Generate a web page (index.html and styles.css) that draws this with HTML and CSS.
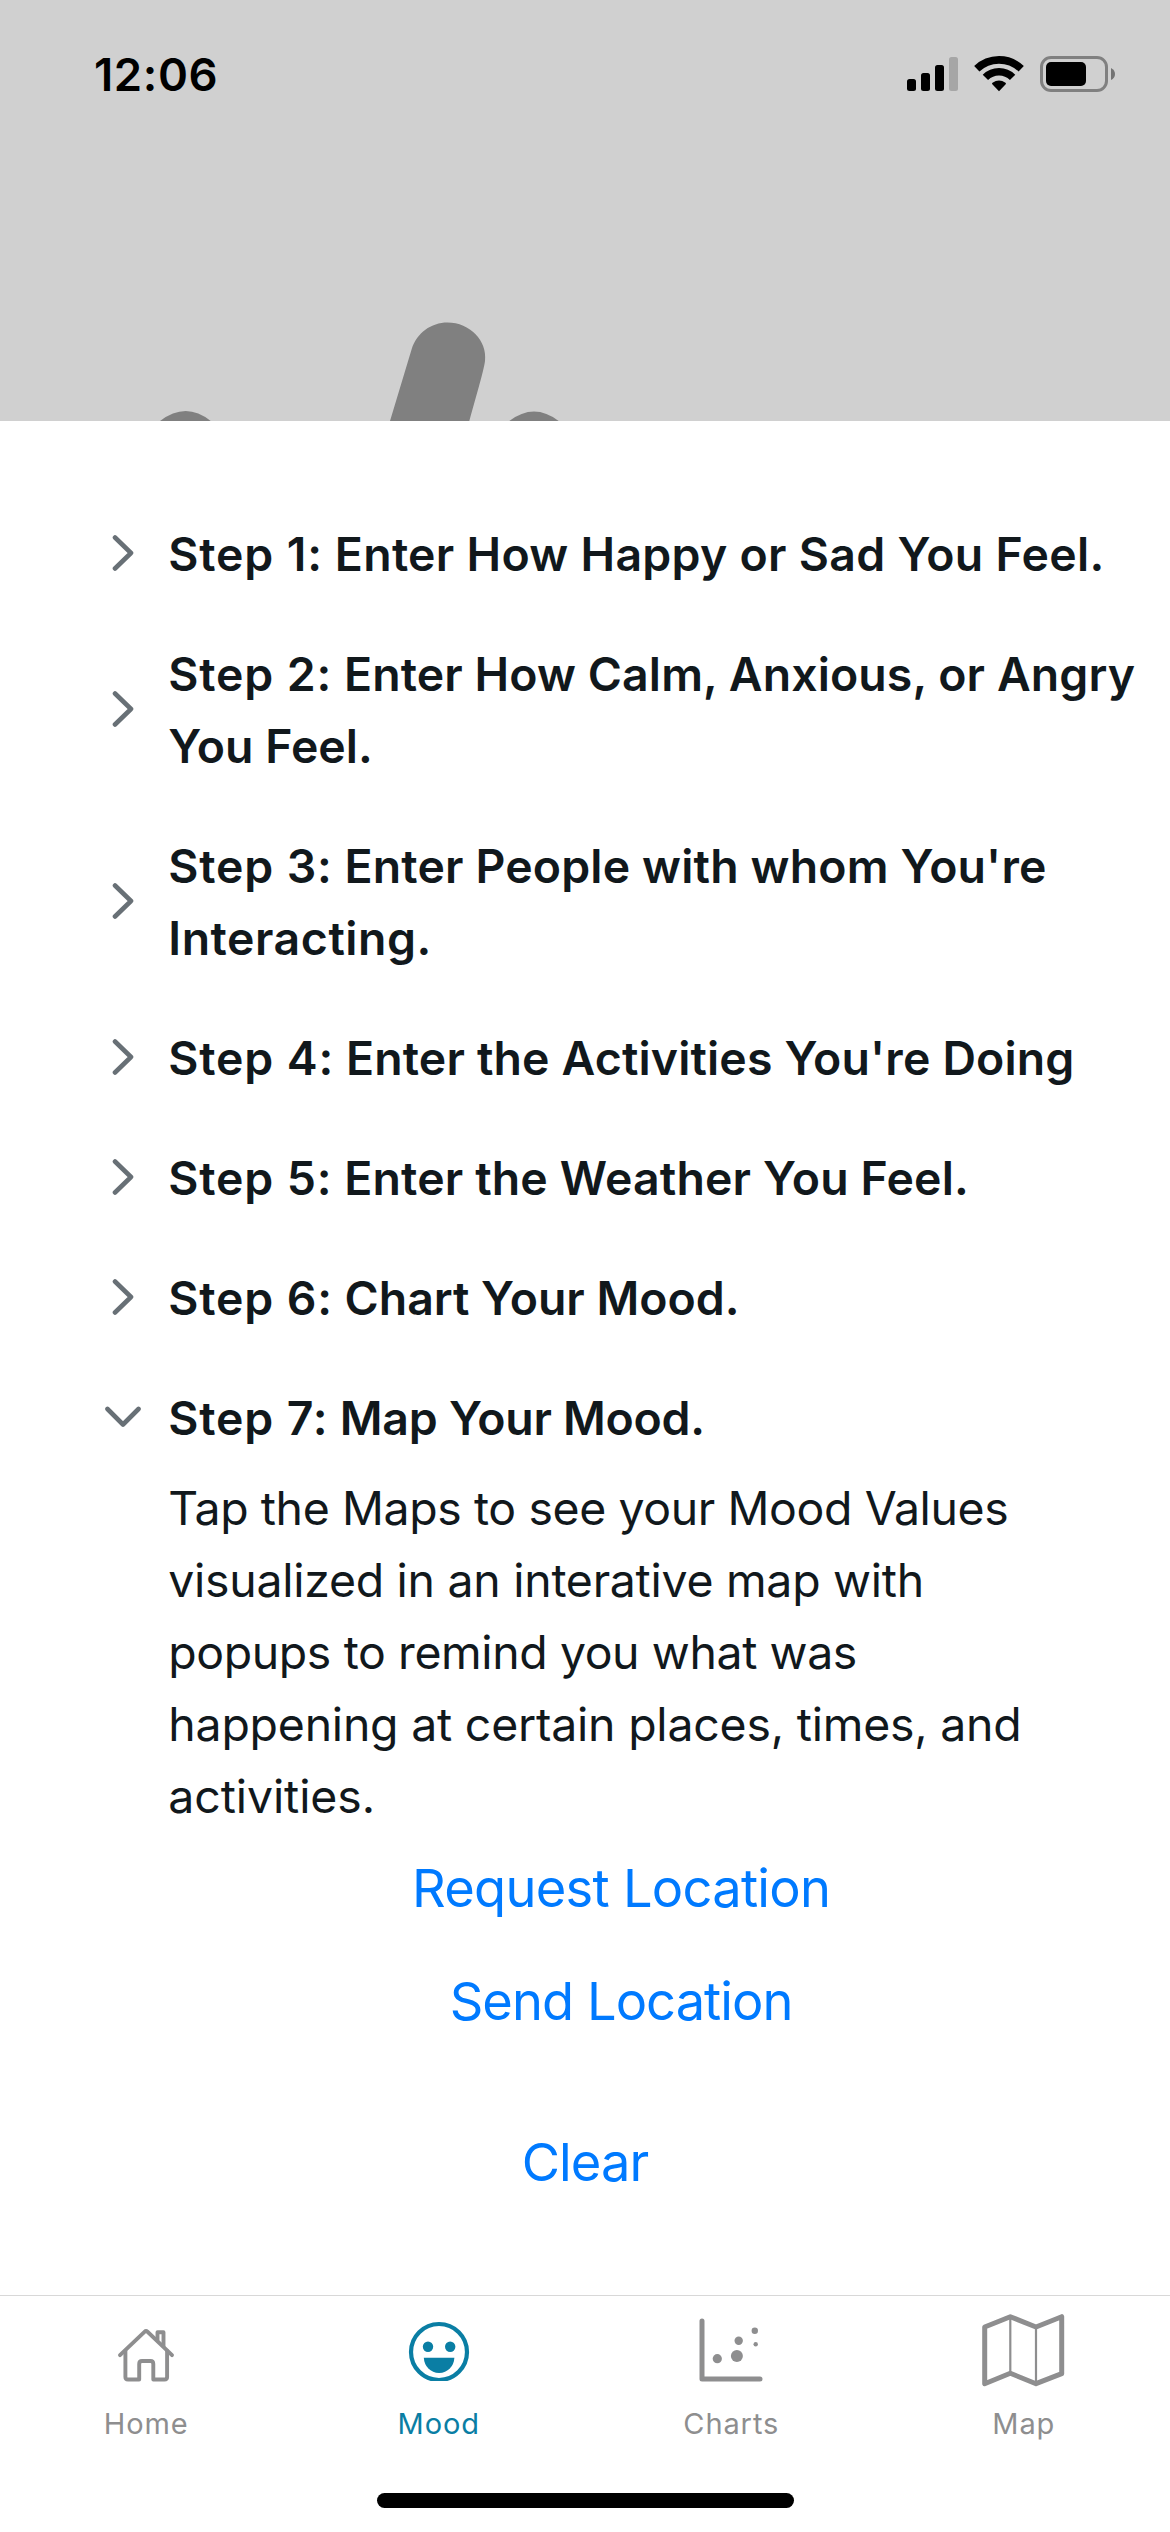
FILE: index.html
```html
<!DOCTYPE html>
<html lang="en">
<head>
<meta charset="utf-8">
<title>Mood</title>
<link rel="stylesheet" href="styles.css">
</head>
<body>
<svg class="defs" width="0" height="0" aria-hidden="true">
  <symbol id="chevron-right" viewBox="0 0 36 36"><path d="M10 2.5 26 18 10 33.5"/></symbol>
  <symbol id="chevron-down" viewBox="0 0 36 36"><path d="M2.5 10 18 25.5 33.5 10"/></symbol>
</svg>
<div class="screen">
  <header class="hero">
    <div class="status">
      <span class="time">12:06</span>
      <svg class="status-icons" width="210" height="40" viewBox="0 0 210 40">
        <rect x="2" y="26" width="9" height="12" rx="2.5"/>
        <rect x="16" y="20" width="9" height="18" rx="2.5"/>
        <rect x="30" y="12" width="9" height="26" rx="2.5"/>
        <rect x="44" y="4" width="9" height="34" rx="2.5" fill="#a6a6a6"/>
        <g fill="none" stroke="#000" stroke-width="7.6">
          <path d="M71.8 15.8A32 32 0 0 1 116.2 15.8"/>
          <path d="M80.4 24.4A19.3 19.3 0 0 1 107.6 24.4"/>
        </g>
        <path d="M94 38.200 87.300 31.200Q86.600 30.400 87.500 29.800Q94 25.200 100.500 29.800Q101.400 30.400 100.700 31.200Z"/>
        <rect x="136.500" y="4.500" width="65" height="33" rx="9.500" fill="none" stroke="#808080" stroke-width="3"/>
        <rect x="141" y="9" width="40" height="24" rx="5"/>
        <path d="M206 15Q210 17 210 21T206 27Z" fill="#737373"/>
      </svg>
    </div>
    <svg class="hero-icon" width="400" height="99" viewBox="0 0 400 99">
      <path d="M0 99Q26 79 50.700 99Z"/>
      <path d="M230 99 251.700 27C257 11 271 .5 287.500 .5C310 .5 327.500 19 325 39C323.500 49 320 61 309.300 99Z"/>
      <path d="M349.300 99Q374 80 398.700 99Z"/>
    </svg>
  </header>

  <main class="sheet">
    <div class="steps">
      <div class="step"><svg class="chevron"><use href="#chevron-right"/></svg><h2><span class="s1"><b>Step 1:</b> Enter How Happy or Sad You Feel.</span></h2></div>
      <div class="step"><svg class="chevron"><use href="#chevron-right"/></svg><h2><span class="s2"><b>Step 2:</b> Enter How Calm, Anxious, or Angry</span><span class="s2b">You Feel.</span></h2></div>
      <div class="step"><svg class="chevron"><use href="#chevron-right"/></svg><h2><span class="s3"><b>Step 3:</b> Enter People with whom You're</span><span class="s3b">Interacting.</span></h2></div>
      <div class="step"><svg class="chevron"><use href="#chevron-right"/></svg><h2><span class="s3"><b>Step 4:</b> Enter the Activities You're Doing</span></h2></div>
      <div class="step"><svg class="chevron"><use href="#chevron-right"/></svg><h2><span class="s3"><b>Step 5:</b> Enter the Weather You Feel.</span></h2></div>
      <div class="step"><svg class="chevron"><use href="#chevron-right"/></svg><h2><span class="s6"><b>Step 6:</b> Chart Your Mood.</span></h2></div>
      <div class="step"><svg class="chevron"><use href="#chevron-down"/></svg><h2><span class="s7"><b>Step 7:</b> Map Your Mood.</span></h2></div>
    </div>
    <div class="details">
      <p><span class="d1">Tap the Maps to see your Mood Values</span><span class="d2">visualized in an interative map with</span><span class="d1">popups to remind you what was</span><span class="d4">happening at certain places, times, and</span><span class="d5">activities.</span></p>
      <div class="actions">
        <a class="link request">Request Location</a>
        <a class="link">Send Location</a>
      </div>
    </div>
    <a class="link clear">Clear</a>
  </main>

  <nav class="tabs">
    <div class="tab">
      <svg width="90" height="90" viewBox="0 0 90 90" class="line">
        <path d="M19 55.200 43.500 31.800Q45 30.400 46.500 31.800L71 55.200"/>
        <path d="M24.400 51V77Q24.400 79.500 27 79.500H38.200V64Q38.200 61 41 61H49.500Q52.300 61 52.300 64V79.500H63.500Q66.100 79.500 66.100 77V51"/>
        <path d="M56.500 40V32.300H62.500V46"/>
      </svg>
      <span>Home</span>
    </div>
    <div class="tab active">
      <svg width="90" height="90" viewBox="0 0 90 90">
        <svg width="90" height="81" viewBox="0 0 90 81"><circle cx="45" cy="52" r="28" fill="none" stroke="currentColor" stroke-width="4.200"/></svg>
        <circle cx="34" cy="46.700" r="5.200"/><circle cx="56.200" cy="46.700" r="5.200"/>
        <path d="M29.800 57.700H60.400Q60 64 56 68.300Q51.500 73 45.100 73Q38.700 73 34.200 68.300Q30.200 64 29.800 57.700Z"/>
      </svg>
      <span>Mood</span>
    </div>
    <div class="tab">
      <svg width="90" height="90" viewBox="0 0 90 90">
        <path d="M16 21V79H74" fill="none" stroke="currentColor" stroke-width="5" stroke-linecap="round" stroke-linejoin="round"/>
        <circle cx="31.300" cy="58.700" r="4.600"/><circle cx="50.900" cy="56" r="6"/><circle cx="52.700" cy="40.700" r="4.200"/><circle cx="68.800" cy="30.800" r="3.200"/><circle cx="69.700" cy="44.200" r="2.200"/>
      </svg>
      <span>Charts</span>
    </div>
    <div class="tab">
      <svg width="90" height="90" viewBox="0 0 90 90" fill="none" stroke="currentColor" stroke-linejoin="round">
        <path d="M5.700 27 31.300 16.700 57 27 82.700 16.700V73.700L57 83.700 31.300 73.300 5.700 83.700Z" stroke-width="5"/>
        <path d="M31.300 17V73M57 27V83" stroke-width="2.200"/>
      </svg>
      <span>Map</span>
    </div>
  </nav>
  <div class="home-indicator"></div>
</div>
</body>
</html>
```
FILE: styles.css
```css
* { box-sizing: border-box; }
body { margin: 0; background: #fff; font-family: Inter, "Liberation Sans", sans-serif; color: #11181c; }
.defs { position: absolute; }
.screen { width: 1170px; height: 2532px; display: flex; flex-direction: column; overflow: hidden; }

.hero { height: 421px; flex: none; background: #d0d0d0; display: flex; flex-direction: column; justify-content: space-between; }
.status { display: flex; justify-content: space-between; align-items: flex-start; padding: 47px 55px 0 94px; color: #000; }
.time { font-size: 45.5px; font-weight: 600; line-height: 56px; letter-spacing: .6px; }
.status-icons { display: block; margin-top: 6px; }
.hero-icon { display: block; margin-left: 160px; fill: #808080; }

.sheet { height: 1874px; flex: none; padding-top: 97px; display: flex; flex-direction: column; align-items: stretch; }
.steps { display: flex; flex-direction: column; gap: 48px; padding-left: 105px; }
.step { display: grid; grid-template-columns: 36px auto; column-gap: 27.3px; align-items: center; justify-content: start; }
.chevron { width: 36px; height: 36px; display: block; margin-top: -2px; fill: none; stroke: #687076; stroke-width: 4.6; stroke-linecap: round; stroke-linejoin: round; }
h2, p { margin: 0; font-size: 46.4px; line-height: 72px; font-weight: 600; white-space: nowrap; }
h2 span, p span { display: block; }
h2 b { font-weight: inherit; letter-spacing: .85px; }
p { font-weight: 400; }
.s1 { letter-spacing: .3px; }
.s2 { letter-spacing: .12px; }
.s2b { letter-spacing: 0; }
.s3 { letter-spacing: .165px; }
.s3b { letter-spacing: .55px; }
.s6 { letter-spacing: 0; }
.s7 { letter-spacing: -.24px; }
.d1 { letter-spacing: -.38px; }
.d2 { letter-spacing: -.26px; }
.d4 { letter-spacing: -.2px; }
.d5 { letter-spacing: -.08px; }

.details { padding: 18px 96px 0 168.3px; }
.actions { display: flex; flex-direction: column; align-items: center; gap: 47px; margin: 23px 0 0; }
.link { font-size: 52.4px; line-height: 66px; letter-spacing: -.93px; color: #007aff; white-space: nowrap; }
.request { letter-spacing: -.72px; }
.clear { align-self: center; margin-top: 95px; }

.tabs { height: 155px; flex: none; border-top: 1px solid #d8d8d8; display: grid; grid-template-columns: repeat(4, 1fr); }
.tab { display: flex; flex-direction: column; align-items: center; padding-top: 4px; gap: 16px; color: #8e8e8f; fill: currentColor; font-size: 29px; line-height: 36px; letter-spacing: .9px; }
.tab svg { display: block; flex: none; }
.tab svg[fill="none"] { fill: none; }
.tab .line { fill: none; stroke: currentColor; stroke-width: 3.9; stroke-linecap: round; stroke-linejoin: round; }
.tab.active { color: #0a7ea4; }
.home-indicator { width: 417px; height: 15px; margin: 43px 0 0 377px; border-radius: 8px; background: #000; }
```
